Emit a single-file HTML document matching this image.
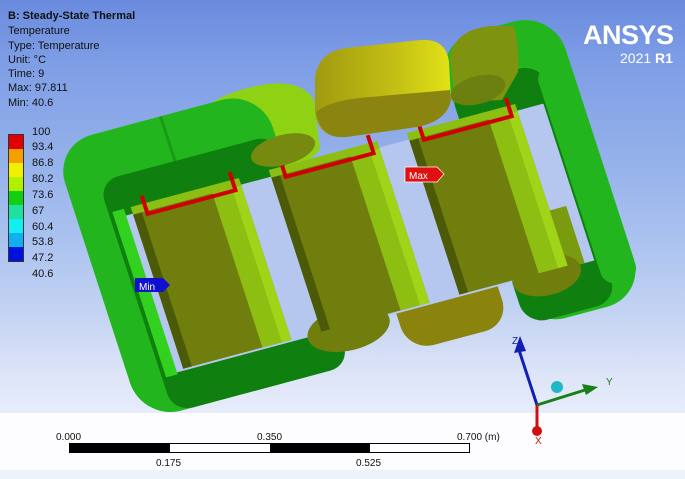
<!DOCTYPE html>
<html><head><style>
body{margin:0;width:685px;height:479px;overflow:hidden;font-family:"Liberation Sans",sans-serif;}
.t{position:absolute;left:8px;font-size:11px;color:#111;}
.l{position:absolute;left:32px;font-size:11px;color:#111;}
</style></head><body>
<div style="position:absolute;left:0;top:0;width:685px;height:479px;background:linear-gradient(#6a8ade 0px,#7d9de6 60px,#90ade9 140px,#a8c0ef 230px,#c2d2f2 310px,#dfe6f8 380px,#e6ecfa 412px)"></div>
<div style="position:absolute;left:0;top:413px;width:685px;height:66px;background:#fdfdff"></div>
<div style="position:absolute;left:0;top:470px;width:685px;height:9px;background:#eef3fb"></div>
<svg width="685" height="479" style="position:absolute;left:0;top:0">
<defs><linearGradient id="yg" x1="0" x2="1"><stop offset="0" stop-color="#a09a10"/><stop offset="0.6" stop-color="#c4c014"/><stop offset="1" stop-color="#e2e218"/></linearGradient></defs>
<path d="M195,118 Q215,92 268,84 Q302,80 314,100 L320,150 L300,168 L210,160 Z" fill="#8fd214"/>
<g transform="matrix(0.966,-0.259,0.309,0.951,60,135)">
<rect x="265" y="185" width="105" height="115" rx="26" fill="#8a840e"/>
<rect x="265" y="185" width="105" height="65" fill="#a09a12"/>
<rect x="-10" y="8" width="215" height="290" rx="40" fill="#22b51e"/>
<rect x="385" y="8" width="123" height="300" rx="40" fill="#22b51e"/>
<rect x="100" y="8" width="3" height="50" fill="#1a9a18"/>
<rect x="22" y="55" width="183" height="243" rx="20" fill="#0f7f10"/>
<rect x="385" y="55" width="95" height="250" rx="22" fill="#0f7f10"/>
<rect x="472" y="60" width="36" height="228" rx="14" fill="#22b51e"/>
<rect x="30" y="95" width="440" height="165" fill="#b5c6ef"/>
<rect x="26" y="88" width="12" height="174" fill="#33d11f"/>
<rect x="430" y="200" width="30" height="60" fill="#7a9a10"/>
<ellipse cx="215" cy="262" rx="42" ry="22" fill="#6f7e0c"/>
<ellipse cx="420" cy="262" rx="35" ry="20" fill="#6f7e0c"/>
<g>
<rect x="45" y="92" width="112" height="166" fill="#6f7e0c"/>
<rect x="45" y="92" width="9" height="166" fill="#4c5a08"/>
<rect x="127" y="92" width="20" height="166" fill="#8cbf12"/>
<rect x="147" y="92" width="10" height="166" fill="#9fd418"/>
<rect x="45" y="88" width="112" height="8" fill="#8cbf12"/>
</g>
<g>
<rect x="188" y="92" width="112" height="166" fill="#6f7e0c"/>
<rect x="188" y="92" width="9" height="166" fill="#4c5a08"/>
<rect x="270" y="92" width="20" height="166" fill="#8cbf12"/>
<rect x="290" y="92" width="10" height="166" fill="#9fd418"/>
<rect x="188" y="88" width="112" height="8" fill="#8cbf12"/>
</g>
<g>
<rect x="331" y="92" width="112" height="166" fill="#6f7e0c"/>
<rect x="331" y="92" width="9" height="166" fill="#4c5a08"/>
<rect x="413" y="92" width="20" height="166" fill="#8cbf12"/>
<rect x="433" y="92" width="10" height="166" fill="#9fd418"/>
<rect x="331" y="88" width="112" height="8" fill="#8cbf12"/>
</g>
<polyline points="59,80 59,99 150,99 150,80" fill="none" stroke="#d00000" stroke-width="4"/>
<polyline points="202,80 202,99 293,99 293,80" fill="none" stroke="#d00000" stroke-width="4"/>
<polyline points="345,80 345,99 436,99 436,80" fill="none" stroke="#d00000" stroke-width="4"/>
</g>
<ellipse cx="283" cy="150" rx="33" ry="15" fill="#768a10" transform="rotate(-15 283 150)"/>
<path d="M315,78 Q318,52 346,48 L420,40 Q446,38 449,62 L451,100 Q446,124 410,128 L346,137 Q317,139 315,110 Z" fill="url(#yg)"/>
<path d="M316,112 Q330,100 370,97 L450,90 L451,100 Q446,124 410,128 L346,137 Q320,139 316,112 Z" fill="#8a8410"/>
<path d="M450,58 Q454,30 490,26 L514,26 Q520,50 518,72 L502,100 L455,102 Z" fill="#7e9410"/>
<ellipse cx="478" cy="90" rx="28" ry="14" fill="#6c8010" transform="rotate(-15 478 90)"/>
<polygon points="135,278 163,278 170,285 163,292 135,292" fill="#1010d0"/>
<text x="139" y="290" font-size="10" fill="#fff" font-family="Liberation Sans">Min</text>
<polygon points="405,167 437,167 444,174 437,182 405,182" fill="#e01010" stroke="#fff" stroke-width="0.7"/>
<text x="409" y="179" font-size="10" fill="#fff" font-family="Liberation Sans">Max</text>
<line x1="537" y1="405" x2="519" y2="350" stroke="#1020b0" stroke-width="3"/>
<polygon points="514,353 520,336 526,351" fill="#1020b0"/>
<line x1="537" y1="405" x2="585" y2="390" stroke="#188018" stroke-width="3"/>
<polygon points="582,384 598,387 586,395" fill="#188018"/>
<line x1="537" y1="405" x2="537" y2="428" stroke="#d01010" stroke-width="3"/>
<circle cx="537" cy="431" r="5" fill="#d01010"/>
<circle cx="557" cy="387" r="6" fill="#20b8c8"/>
<text x="512" y="344" font-size="10" fill="#1020b0" font-family="Liberation Sans">Z</text>
<text x="606" y="385" font-size="10" fill="#188018" font-family="Liberation Sans">Y</text>
<text x="535" y="444" font-size="10" fill="#d01010" font-family="Liberation Sans">X</text>
<rect x="69.5" y="443.5" width="400" height="9" fill="#fff" stroke="#000"/>
<rect x="70" y="444" width="100" height="8" fill="#000"/>
<rect x="270" y="444" width="100" height="8" fill="#000"/>
<g font-size="10" fill="#111" font-family="Liberation Sans">
<text x="56" y="440">0.000</text><text x="257" y="440">0.350</text><text x="457" y="440">0.700 (m)</text>
<text x="156" y="466">0.175</text><text x="356" y="466">0.525</text>
</g>
</svg>
<div class="t" style="top:10px;font-weight:bold">B: Steady-State Thermal</div>
<div class="t" style="top:25px">Temperature</div>
<div class="t" style="top:40px">Type: Temperature</div>
<div class="t" style="top:54px">Unit: °C</div>
<div class="t" style="top:68px">Time: 9</div>
<div class="t" style="top:82px">Max: 97.811</div>
<div class="t" style="top:97px">Min: 40.6</div>
<div style="position:absolute;left:8px;top:134px;width:14px;border:1px solid #333">
<div style="height:14px;background:#e00000"></div><div style="height:14px;background:#f5a000"></div><div style="height:14px;background:#f0f000"></div><div style="height:14px;background:#b0f000"></div><div style="height:14px;background:#10d010"></div><div style="height:14px;background:#20e0a0"></div><div style="height:14px;background:#10f0f0"></div><div style="height:14px;background:#10b0f0"></div><div style="height:14px;background:#0010e0"></div>
</div>
<div class="l" style="top:126px">100</div><div class="l" style="top:141px">93.4</div><div class="l" style="top:157px">86.8</div><div class="l" style="top:173px">80.2</div><div class="l" style="top:189px">73.6</div><div class="l" style="top:205px">67</div><div class="l" style="top:221px">60.4</div><div class="l" style="top:236px">53.8</div><div class="l" style="top:252px">47.2</div><div class="l" style="top:268px">40.6</div>
<div style="position:absolute;left:583px;top:20px;color:#fff;font-weight:bold;font-size:27px;letter-spacing:-0.5px">ANSYS</div>
<div style="position:absolute;left:620px;top:50px;color:#fff;font-size:14px">2021 <b>R1</b></div>
</body></html>
